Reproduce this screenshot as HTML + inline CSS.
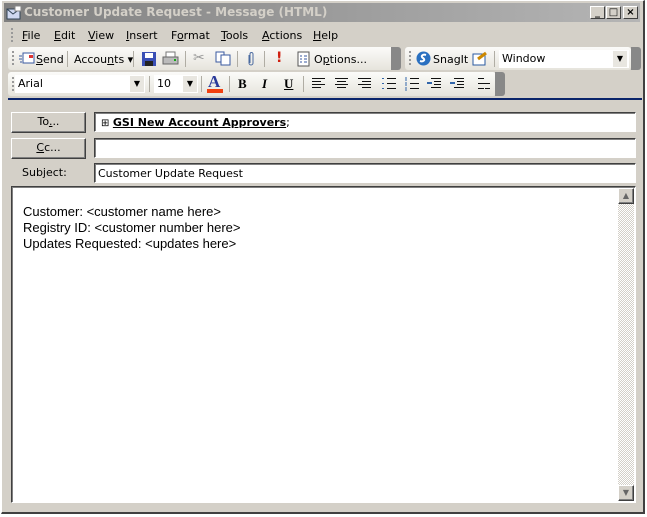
<!DOCTYPE html>
<html><head><meta charset="utf-8">
<style>
*{margin:0;padding:0;box-sizing:border-box}
body{width:647px;height:517px;overflow:hidden;background:#fff;font-family:Tahoma,"DejaVu Sans","Liberation Sans",sans-serif;font-size:11px;position:relative}
.a{position:absolute}
.win{left:1px;top:0;width:644px;height:514px;background:#d4d0c8;border:1px solid #fff;border-right:2px solid #404040;border-bottom:2px solid #404040}
.title{left:4px;top:3px;width:636px;height:19px;background:linear-gradient(90deg,#808080,#b5b5b5);color:#d4d0c8;font-weight:bold;font-size:12px;line-height:19px;padding-left:20px}
.wb{top:6px;width:15px;height:13px;background:#d4d0c8;border:1px solid;border-color:#fff #404040 #404040 #fff;font-size:10px;line-height:11px;text-align:center;color:#000;font-weight:bold}
.menu span{position:absolute;top:29px;font-size:11px}
.tb{background:linear-gradient(#fbfbf9,#e6e4dc);border-radius:3px}
.grip{width:2px;height:14px;border-left:2px dotted #999}
.sep{width:1px;height:16px;background:#b0ada4}
.fld{background:#fff;border:1px solid;border-color:#404040 #fff #fff #404040;box-shadow:inset 1px 1px 0 #808080}
.btn{background:#d4d0c8;border:1px solid;border-color:#fff #404040 #404040 #fff;box-shadow:inset -1px -1px 0 #808080;text-align:center;line-height:18px}
.chev{width:10px;background:#888;border-radius:0 3px 3px 0}
</style></head><body>
<div class="a win"></div>
<div class="a title">Customer Update Request - Message (HTML)</div>
<svg class="a" style="left:6px;top:5px" width="16" height="15"><rect x="1" y="4" width="13" height="10" fill="#cfd8f0" stroke="#345"/><path d="M1 4l6 5 7-5" stroke="#345" fill="none"/><rect x="9" y="1" width="6" height="5" fill="#fff" stroke="#888"/></svg>
<div class="a wb" style="left:590px">_</div>
<div class="a wb" style="left:606px">□</div>
<div class="a wb" style="left:623px">×</div>

<div class="a grip" style="left:11px;top:28px"></div>
<div class="menu">
<span style="left:22px"><u>F</u>ile</span><span style="left:54px"><u>E</u>dit</span><span style="left:88px"><u>V</u>iew</span><span style="left:126px"><u>I</u>nsert</span><span style="left:171px">F<u>o</u>rmat</span><span style="left:221px"><u>T</u>ools</span><span style="left:262px"><u>A</u>ctions</span><span style="left:313px"><u>H</u>elp</span>
</div>

<div class="a tb" style="left:8px;top:47px;width:392px;height:23px"></div>
<div class="a chev" style="left:391px;top:47px;height:23px"></div>
<div class="a tb" style="left:405px;top:47px;width:226px;height:23px"></div>
<div class="a chev" style="left:631px;top:47px;height:23px"></div>
<div class="a grip" style="left:12px;top:51px"></div>
<svg class="a" style="left:19px;top:52px" width="16" height="13"><rect x="4" y="1" width="11" height="10" fill="#fff" stroke="#3a5aa0"/><rect x="10" y="3" width="4" height="3" fill="#d33"/><path d="M0 4h3M0 7h3M1 10h2" stroke="#3a5aa0"/></svg>
<div class="a" style="left:36px;top:53px"><u>S</u>end</div>
<div class="a sep" style="left:67px;top:51px"></div>
<div class="a" style="left:74px;top:53px">Accou<u>n</u>ts ▾</div>
<div class="a sep" style="left:133px;top:51px"></div>
<svg class="a" style="left:141px;top:51px" width="16" height="16"><rect x="1" y="1" width="14" height="14" fill="#3a4fb5"/><rect x="4" y="2" width="8" height="5" fill="#fff"/><rect x="4" y="10" width="8" height="5" fill="#222"/></svg>
<svg class="a" style="left:162px;top:51px" width="17" height="16"><rect x="4" y="1" width="9" height="5" fill="#fff" stroke="#777"/><rect x="1" y="6" width="15" height="7" fill="#bbb" stroke="#666"/><rect x="12" y="8" width="2" height="2" fill="#1a1"/></svg>
<div class="a sep" style="left:185px;top:51px"></div>
<div class="a" style="left:193px;top:50px;color:#999;font-size:14px">✂</div>
<svg class="a" style="left:215px;top:51px" width="16" height="15"><rect x="1" y="1" width="8" height="10" fill="#fff" stroke="#3a5aa0"/><rect x="6" y="4" width="9" height="10" fill="#fff" stroke="#3a5aa0"/></svg>
<div class="a sep" style="left:237px;top:51px"></div>
<svg class="a" style="left:246px;top:51px" width="10" height="16"><path d="M3 4v8a2 2 0 0 0 4 0V3a1.5 1.5 0 0 0-3 0v9" stroke="#4a6aa0" fill="none"/></svg>
<div class="a sep" style="left:264px;top:51px"></div>
<div class="a" style="left:276px;top:50px;color:#d02010;font-weight:bold;font-size:14px">!</div>
<svg class="a" style="left:297px;top:51px" width="14" height="16"><rect x="1" y="1" width="11" height="14" fill="#fff" stroke="#555"/><path d="M3 5h2M7 5h3M3 8h2M7 8h3M3 11h2M7 11h3" stroke="#3a5aa0"/></svg>
<div class="a" style="left:314px;top:53px">O<u>p</u>tions...</div>
<div class="a grip" style="left:409px;top:51px"></div>
<svg class="a" style="left:416px;top:51px" width="15" height="15"><circle cx="7.5" cy="7.5" r="7" fill="#2a70c0"/><path d="M10 4c-3-1-6 1-3 3s0 4-3 3" stroke="#fff" stroke-width="2" fill="none"/></svg>
<div class="a" style="left:433px;top:53px">SnagIt</div>
<svg class="a" style="left:472px;top:50px" width="17" height="17"><rect x="1" y="4" width="12" height="11" fill="#fff" stroke="#2a5aa0"/><path d="M6 9l8-6" stroke="#c80" stroke-width="3"/></svg>
<div class="a sep" style="left:494px;top:51px"></div>
<div class="a" style="left:499px;top:50px;width:130px;height:18px;background:#fff;line-height:18px;padding-left:3px">Window</div>
<div class="a" style="left:613px;top:51px;width:14px;height:16px;background:#e8e6e0;font-size:8px;text-align:center;line-height:16px">▼</div>

<div class="a tb" style="left:8px;top:72px;width:488px;height:24px"></div>
<div class="a chev" style="left:495px;top:72px;height:24px"></div>
<div class="a grip" style="left:12px;top:77px"></div>
<div class="a" style="left:15px;top:75px;width:130px;height:18px;background:#fff;line-height:18px;padding-left:3px">Arial</div>
<div class="a" style="left:130px;top:76px;width:14px;height:16px;background:#e8e6e0;font-size:8px;text-align:center;line-height:16px">▼</div>
<div class="a sep" style="left:149px;top:76px"></div>
<div class="a" style="left:154px;top:75px;width:44px;height:18px;background:#fff;line-height:18px;padding-left:3px">10</div>
<div class="a" style="left:183px;top:76px;width:14px;height:16px;background:#e8e6e0;font-size:8px;text-align:center;line-height:16px">▼</div>
<div class="a sep" style="left:201px;top:76px"></div>
<div class="a" style="left:208px;top:72px;color:#2a3a9a;font-family:'Liberation Serif',serif;font-size:17px;font-weight:bold">A</div>
<div class="a" style="left:207px;top:89px;width:16px;height:4px;background:#f04010"></div>
<div class="a sep" style="left:229px;top:76px"></div>
<div class="a" style="left:238px;top:76px;font-family:'Liberation Serif',serif;font-size:13px;font-weight:bold">B</div>
<div class="a" style="left:262px;top:76px;font-family:'Liberation Serif',serif;font-size:13px;font-style:italic;font-weight:bold">I</div>
<div class="a" style="left:284px;top:76px;font-family:'Liberation Serif',serif;font-size:13px;font-weight:bold;text-decoration:underline">U</div>
<div class="a sep" style="left:303px;top:76px"></div>
<svg class="a" style="left:311px;top:77px" width="190" height="14" stroke="#111">
<path d="M1 1.5h13M1 4.5h9M1 7.5h13M1 10.5h9"/>
<path d="M24 1.5h13M26 4.5h9M24 7.5h13M26 10.5h9"/>
<path d="M47 1.5h13M51 4.5h9M47 7.5h13M51 10.5h9"/>
<path d="M76 1.5h9M76 6.5h9M76 11.5h9"/><path d="M71 1.5h2M71 6.5h2M71 11.5h2" stroke="#36a"/>
<path d="M99 1.5h9M99 6.5h9M99 11.5h9"/><path d="M95 0v4M95 5v4M95 10v4" stroke="#36a"/>
<path d="M120 1.5h10M123 4.5h7M123 7.5h7M120 10.5h10"/><path d="M116 6h5" stroke="#36a" stroke-width="2"/>
<path d="M143 1.5h10M146 4.5h7M146 7.5h7M143 10.5h10"/><path d="M139 6h5" stroke="#36a" stroke-width="2"/>
<path d="M167 1.5h6M167 6.5h12M167 11.5h6M174 11.5h5"/>
</svg>
<div class="a" style="top:98px;height:2px;background:#0a246a;left:8px;width:634px"></div>

<div class="a btn" style="left:11px;top:112px;width:75px;height:21px">To<u>.</u>..</div>
<div class="a fld" style="left:94px;top:112px;width:542px;height:20px;padding:3px 0 0 6px"><span style="font-size:10px">⊞</span> <b><u>GSI New Account Approvers</u></b>;</div>
<div class="a btn" style="left:11px;top:138px;width:75px;height:21px"><u>C</u>c...</div>
<div class="a fld" style="left:94px;top:138px;width:542px;height:20px"></div>
<div class="a" style="left:22px;top:166px">Subject:</div>
<div class="a fld" style="left:94px;top:163px;width:542px;height:20px;padding:3px 0 0 3px">Customer Update Request</div>

<div class="a fld" style="left:11px;top:186px;width:625px;height:317px"></div>
<div class="a" style="left:23px;top:204px;font-family:'Liberation Sans',Arial,sans-serif;font-size:13px;line-height:16px;color:#000">Customer: &lt;customer name here&gt;<br>Registry ID: &lt;customer number here&gt;<br>Updates Requested: &lt;updates here&gt;</div>
<div class="a" style="left:618px;top:188px;width:16px;height:313px;background:repeating-conic-gradient(#d4d0c8 0 25%,#fff 0 50%) 0 0/2px 2px"></div>
<div class="a btn" style="left:618px;top:188px;width:16px;height:16px;font-size:8px;line-height:14px;color:#666">▲</div>
<div class="a btn" style="left:618px;top:485px;width:16px;height:16px;font-size:8px;line-height:14px;color:#666">▼</div>
</body></html>
